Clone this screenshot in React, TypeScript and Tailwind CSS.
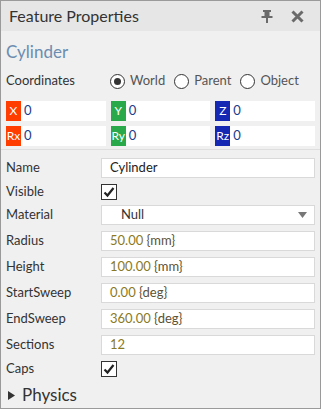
import React from "react";

const font = { fontFamily: 'Lato, "Noto Sans", sans-serif' };

function Num({ n, u }: { n: string; u?: string }) {
  return (
    <span>
      <span className="text-[#8b7a1e]">{n}</span>
      {u && <span className="text-[#5c5234]"> {u}</span>}
    </span>
  );
}

function Radio({ label, checked }: { label: string; checked?: boolean }) {
  return (
    <div className="flex items-center gap-[5px]">
      <div className="w-[15px] h-[15px] rounded-full border border-[#333] bg-white flex items-center justify-center">
        {checked && <div className="w-[7px] h-[7px] rounded-full bg-[#333]" />}
      </div>
      <span className="text-[13px] text-[#555]">{label}</span>
    </div>
  );
}

function Coord({ l, c }: { l: string; c: string }) {
  return (
    <div className="flex h-[20px] bg-white items-center">
      <div className={`w-[15px] h-full flex items-center justify-center text-white text-[12px] ${c}`}>
        {l}
      </div>
      <span className="ml-[3px] text-[13px] text-[#1a3c8a]">0</span>
    </div>
  );
}

function Check() {
  return (
    <div className="w-[16px] h-[16px] border border-[#333] bg-white flex items-center justify-center">
      <svg width="12" height="12" viewBox="0 0 12 12">
        <path d="M1.5 6.5 L4.5 9.5 L10.5 2" stroke="#222" strokeWidth="2.2" fill="none" />
      </svg>
    </div>
  );
}

function Row({ label, children, h = "h-[20px]" }: { label: string; children: React.ReactNode; h?: string }) {
  return (
    <div className={`flex items-center ${h}`}>
      <div className="w-[95px] text-[13px] text-[#333]">{label}</div>
      <div className="flex-1">{children}</div>
    </div>
  );
}

function Input({ children }: { children: React.ReactNode }) {
  return (
    <div className="h-[20px] bg-white border border-[#d9d9d9] flex items-center pl-[8px] text-[13px] text-[#222]">
      {children}
    </div>
  );
}

export default function App() {
  return (
    <div style={font} className="w-[321px] h-[409px] bg-[#f0f0f0] border border-[#9a9a9a] flex flex-col overflow-hidden">
      <div className="h-[30px] bg-[#e6e6e6] flex items-center pl-[8px] pr-[16px] shrink-0">
        <span className="text-[16px] text-[#333]">Feature Properties</span>
        <div className="ml-auto flex items-center gap-[18px]">
          <svg width="12" height="13" viewBox="0 0 12 13">
            <rect x="2" y="0" width="8" height="2" fill="#6a6a6a" />
            <rect x="3.5" y="2" width="5" height="4" fill="#6a6a6a" />
            <rect x="0.5" y="6" width="11" height="2" fill="#6a6a6a" />
            <rect x="5" y="8" width="2" height="5" fill="#6a6a6a" />
          </svg>
          <svg width="13" height="13" viewBox="0 0 13 13">
            <path d="M1.5 1.5 L11.5 11.5 M11.5 1.5 L1.5 11.5" stroke="#6a6a6a" strokeWidth="3" />
          </svg>
        </div>
      </div>
      <div className="px-[5px] pt-[10px] flex flex-col">
        <div className="text-[17px] text-[#6b8db0] leading-[22px]">Cylinder</div>
        <div className="flex items-center mt-[8px] h-[20px]">
          <span className="text-[13px] text-[#333] w-[104px]">Coordinates</span>
          <div className="flex items-center gap-[9px]">
            <Radio label="World" checked />
            <Radio label="Parent" />
            <Radio label="Object" />
          </div>
        </div>
        <div className="grid grid-cols-3 gap-x-[5px] gap-y-[5px] mt-[10px]">
          <Coord l="X" c="bg-[#ff3d00]" />
          <Coord l="Y" c="bg-[#2aa94a]" />
          <Coord l="Z" c="bg-[#1428b4]" />
          <Coord l="Rx" c="bg-[#ff3d00]" />
          <Coord l="Ry" c="bg-[#2aa94a]" />
          <Coord l="Rz" c="bg-[#1428b4]" />
        </div>
      </div>
      <div className="mt-[3px] border-t border-[#dedede]" />
      <div className="px-[5px] pt-[8px] flex flex-col gap-[6px]">
        <Row label="Name">
          <Input>Cylinder</Input>
        </Row>
        <Row label="Visible" h="h-[15px]">
          <Check />
        </Row>
        <Row label="Material">
          <div className="h-[20px] bg-white border border-[#d9d9d9] flex items-center pl-[19px] pr-[7px] text-[13px] text-[#333]">
            Null
            <svg className="ml-auto" width="9" height="6" viewBox="0 0 9 6">
              <path d="M0 0 L9 0 L4.5 6 Z" fill="#777" />
            </svg>
          </div>
        </Row>
        <Row label="Radius">
          <Input>
            <Num n="50.00" u="{mm}" />
          </Input>
        </Row>
        <Row label="Height">
          <Input>
            <Num n="100.00" u="{mm}" />
          </Input>
        </Row>
        <Row label="StartSweep">
          <Input>
            <Num n="0.00" u="{deg}" />
          </Input>
        </Row>
        <Row label="EndSweep">
          <Input>
            <Num n="360.00" u="{deg}" />
          </Input>
        </Row>
        <Row label="Sections">
          <Input>
            <Num n="12" />
          </Input>
        </Row>
        <Row label="Caps" h="h-[16px]">
          <Check />
        </Row>
        <div className="flex items-center h-[24px] pl-[2px]">
          <svg width="7" height="9" viewBox="0 0 7 9">
            <path d="M0 0 L7 4.5 L0 9 Z" fill="#333" />
          </svg>
          <span className="ml-[7px] text-[17px] text-[#333]">Physics</span>
        </div>
      </div>
    </div>
  );
}
